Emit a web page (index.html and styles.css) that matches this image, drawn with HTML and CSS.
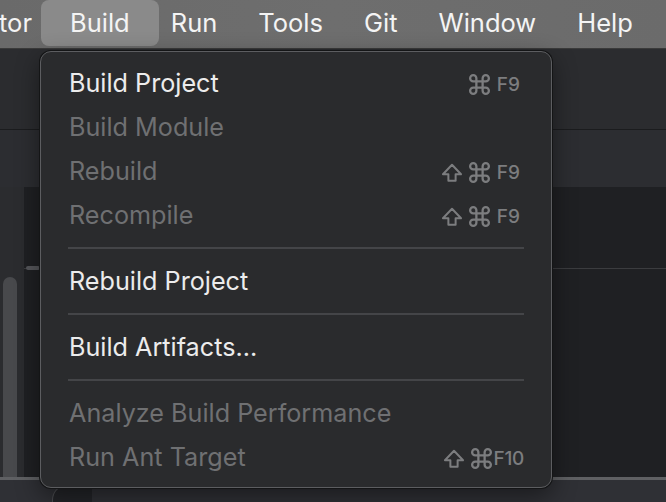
FILE: index.html
```html
<!DOCTYPE html>
<html>
<head>
<meta charset="utf-8">
<link rel="stylesheet" href="styles.css">
</head>
<body>
<div class="screen">
  <header class="menubar">
    <span class="mb-item mb-cut">tor</span>
    <span class="mb-item mb-active">Build</span>
    <span class="mb-item">Run</span>
    <span class="mb-item">Tools</span>
    <span class="mb-item">Git</span>
    <span class="mb-item">Window</span>
    <span class="mb-item">Help</span>
  </header>
  <div class="workspace">
    <div class="toolbar"></div>
    <div class="tabbar"></div>
    <div class="main">
      <div class="sidepanel"><div class="thumb"></div></div>
      <div class="editor">
        <div class="editor-top"><span class="tick"></span></div>
        <div class="editor-body"></div>
      </div>
    </div>
    <div class="statusline"></div>
    <div class="bottom"><span class="bottom-corner"></span></div>
  </div>

  <div class="dropdown">
    <div class="item"><span class="label">Build Project</span><span class="keys f9"><svg class="cmd" viewBox="0 0 24 24"><path d="M15 6v12a3 3 0 1 0 3-3H6a3 3 0 1 0 3 3V6a3 3 0 1 0-3 3h12a3 3 0 1 0-3-3"/></svg><span class="fk">F9</span></span></div>
    <div class="item disabled"><span class="label">Build Module</span></div>
    <div class="item disabled"><span class="label">Rebuild</span><span class="keys f9"><svg class="shift" viewBox="0 0 24 21"><path d="M8 19.5v-7H2L12 2l10 10.5h-6v7z"/></svg><svg class="cmd" viewBox="0 0 24 24"><path d="M15 6v12a3 3 0 1 0 3-3H6a3 3 0 1 0 3 3V6a3 3 0 1 0-3 3h12a3 3 0 1 0-3-3"/></svg><span class="fk">F9</span></span></div>
    <div class="item disabled"><span class="label">Recompile</span><span class="keys f9"><svg class="shift" viewBox="0 0 24 21"><path d="M8 19.5v-7H2L12 2l10 10.5h-6v7z"/></svg><svg class="cmd" viewBox="0 0 24 24"><path d="M15 6v12a3 3 0 1 0 3-3H6a3 3 0 1 0 3 3V6a3 3 0 1 0-3 3h12a3 3 0 1 0-3-3"/></svg><span class="fk">F9</span></span></div>
    <div class="sep"></div>
    <div class="item"><span class="label">Rebuild Project</span></div>
    <div class="sep"></div>
    <div class="item"><span class="label">Build Artifacts...</span></div>
    <div class="sep"></div>
    <div class="item disabled"><span class="label">Analyze Build Performance</span></div>
    <div class="item disabled"><span class="label">Run Ant Target</span><span class="keys"><svg class="shift" viewBox="0 0 24 21"><path d="M8 19.5v-7H2L12 2l10 10.5h-6v7z"/></svg><svg class="cmd tight" viewBox="0 0 24 24"><path d="M15 6v12a3 3 0 1 0 3-3H6a3 3 0 1 0 3 3V6a3 3 0 1 0-3 3h12a3 3 0 1 0-3-3"/></svg><span class="fk fk10">F10</span></span></div>
  </div>
</div>
</body>
</html>
```

FILE: styles.css
```css
* { box-sizing: border-box; }
html, body { margin: 0; padding: 0; }
body {
  width: 666px;
  height: 502px;
  overflow: hidden;
  background: #1f2023;
  font-family: Inter, "Noto Sans", "Liberation Sans", sans-serif;
}
.screen {
  position: relative;
  width: 666px;
  height: 502px;
  display: flex;
  flex-direction: column;
  overflow: hidden;
}
.menubar {
  height: 49px;
  flex: none;
  display: flex;
  align-items: flex-start;
  background: linear-gradient(90deg, #6a6a6a, #6e6e6e 50%, #6b6b6b);
  border-bottom: 1px solid #3a3a3a;
  white-space: nowrap;
  overflow: hidden;
}
.mb-item {
  color: #f4f4f4;
  font-size: 25.5px;
  line-height: 46px;
  height: 46px;
  padding: 0 20.5px;
}
.mb-cut { padding: 0 17.5px 0 0; margin-left: -1px; }
.mb-active {
  background: #8a8a8a;
  border-radius: 8px;
  padding: 0 29px;
  margin: 0 -8.5px;
}
.workspace {
  flex: 1;
  min-height: 0;
  display: flex;
  flex-direction: column;
}
.toolbar {
  height: 81px;
  flex: none;
  background: #2b2c2f;
  border-bottom: 1px solid #1b1c1e;
}
.tabbar {
  height: 57px;
  flex: none;
  background: #2c2d31;
}
.main {
  flex: 1;
  min-height: 0;
  display: flex;
}
.sidepanel {
  width: 24px;
  background: #2b2c2f;
  padding: 90px 0 0 3px;
  overflow: hidden;
}
.thumb {
  width: 14px;
  height: 260px;
  border-radius: 7px;
  background: #48494c;
}
.editor {
  flex: 1;
  display: flex;
  flex-direction: column;
  background: #1f2023;
}
.editor-top {
  height: 82px;
  border-bottom: 1px solid #3b3c3f;
  position: relative;
}
.tick {
  position: absolute;
  left: 2px;
  top: 79px;
  width: 14px;
  height: 4px;
  border-radius: 2px;
  background: #55565a;
}
.editor-body { flex: 1; }
.statusline {
  height: 3px;
  flex: none;
  background: #5f6063;
}
.bottom {
  height: 22px;
  flex: none;
  background: #2f3035;
  position: relative;
  overflow: hidden;
}
.bottom-corner {
  position: absolute;
  left: 52px;
  top: 4px;
  width: 40px;
  height: 30px;
  border-top-left-radius: 16px;
  border-left: 1px solid #4a4b4f;
  border-top: 1px solid #4a4b4f;
  background: #232428;
}
.dropdown {
  position: absolute;
  left: 40px;
  top: 51px;
  width: 512px;
  height: 437px;
  background: #2a2b2d;
  border: 1px solid #5c5d60;
  border-radius: 11px;
  box-shadow: 0 0 0 1px #141516, 0 8px 24px rgba(0,0,0,0.45);
  padding: 9px 27px 8px 27px;
  display: flex;
  flex-direction: column;
}
.item {
  height: 44px;
  flex: none;
  display: flex;
  align-items: center;
  justify-content: space-between;
  padding-left: 1px;
  color: #ececec;
  font-size: 25.2px;
}
.item.disabled { color: #6f7072; }
.keys {
  display: flex;
  align-items: center;
  color: #7c7d7f;
  font-size: 19px;
  font-weight: 500;
  padding-top: 2px;
}
.keys.f9 { padding-right: 4px; }
.keys svg {
  fill: none;
  stroke: #7c7d7f;
  stroke-width: 2.2;
  stroke-linejoin: round;
  stroke-linecap: round;
}
.shift { width: 22px; height: 19px; margin-right: 6px; }
.cmd { width: 25px; height: 25px; margin: 0 5px 0 -2px; }
.cmd.tight { margin-right: 0; }
.fk { line-height: 1; }
.fk10 { letter-spacing: -0.3px; }
.sep {
  height: 22px;
  flex: none;
  display: flex;
  align-items: center;
}
.sep::before {
  content: "";
  display: block;
  width: 100%;
  height: 2px;
  background: #444548;
}
```
